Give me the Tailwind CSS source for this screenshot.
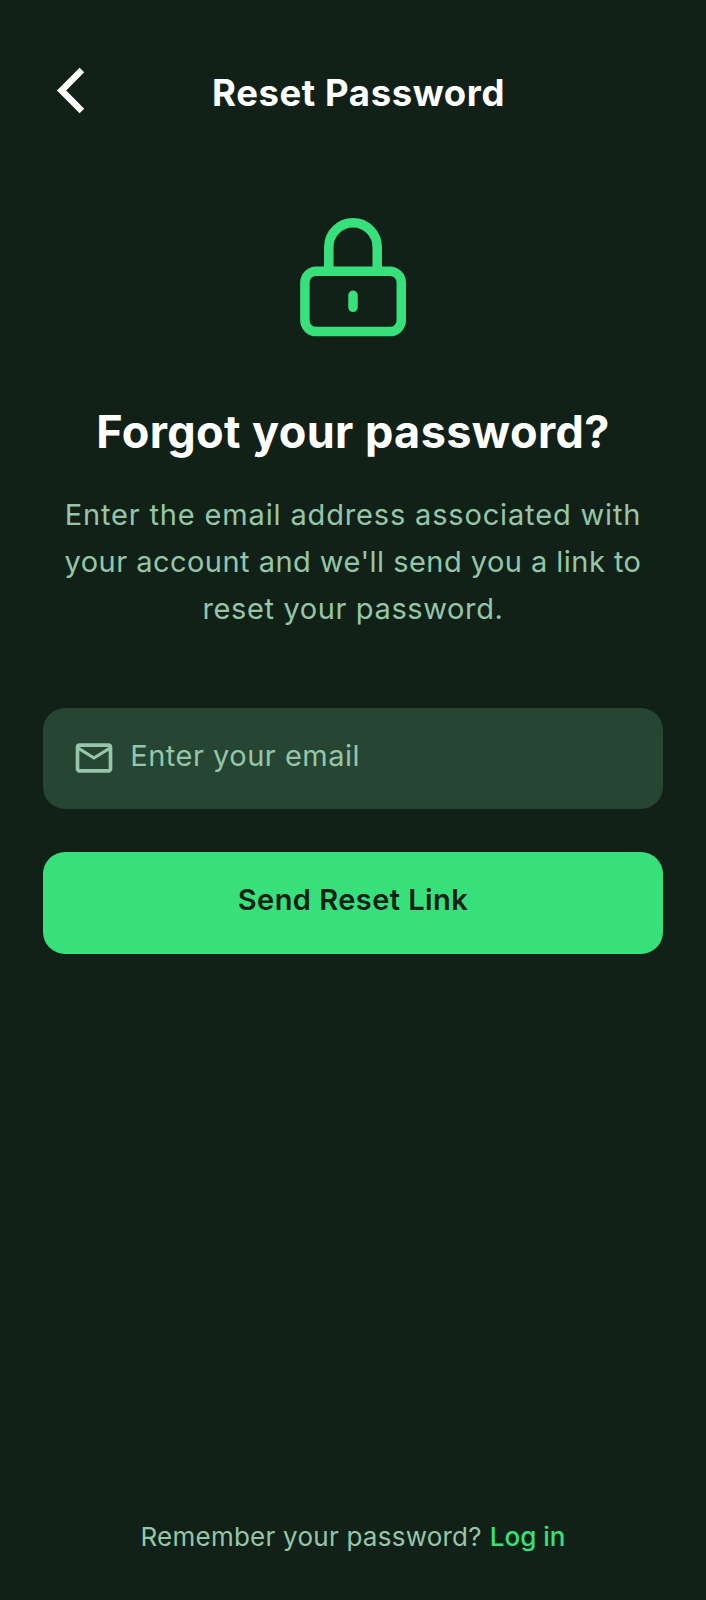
<!DOCTYPE html>
<html lang="en">
<head>
<meta charset="utf-8">
<title>Reset Password</title>
<script src="https://cdn.jsdelivr.net/npm/@tailwindcss/browser@4"></script>
</head>
<body class="bg-[#122118] font-['Inter',sans-serif] text-[#95c6a9] antialiased">
<div class="flex h-[1600px] w-[706px] flex-col whitespace-nowrap">
  <header class="flex h-[138px] items-start pt-[67px]">
    <button class="ml-[56px] w-[30px]" aria-label="Back">
      <svg class="block" width="30" height="48" viewBox="56 67 30 48" fill="#fff"><path d="M57 90.5 79.6 67.8 84.2 72.3 66.2 90.5 84.2 108.7 79.6 113.2Z"/></svg>
    </button>
    <h1 class="ml-[126px] pt-[3px] text-[36.5px] leading-[46px] font-bold tracking-[0.6px] text-white">Reset Password</h1>
  </header>
  <main class="flex flex-col px-[43px]">
    <svg class="mx-auto mt-[72px] block" width="120" height="134" viewBox="293 209.6 120 134" fill="none" stroke="#38e07b" stroke-width="9.5">
      <rect x="304.9" y="270.8" width="96.4" height="60.4" rx="11.3"/>
      <path d="M328.8 270V246.6a24.2 24.2 0 0 1 48.4 0V270"/>
      <path d="M353 294.9v12" stroke-linecap="round"/>
    </svg>
    <h2 class="mt-[61px] text-center text-[45px] leading-[54px] font-bold tracking-[0.4px] text-white">Forgot your password?</h2>
    <p class="mt-[32px] text-center text-[29px] leading-[47px]">
      <span class="block tracking-[0.84px]">Enter the email address associated with</span>
      <span class="block tracking-[0.46px]">your account and we'll send you a link to</span>
      <span class="block tracking-[0.62px]">reset your password.</span>
    </p>
    <label class="mt-[75.5px] flex h-[101.5px] items-center rounded-[22px] bg-[#264532] pl-[29.3px]">
      <svg class="block size-[44px] shrink-0" viewBox="0 0 24 24" fill="#95c6a9"><path d="M22 6c0-1.1-.9-2-2-2H4c-1.1 0-2 .9-2 2v12c0 1.1.9 2 2 2h16c1.1 0 2-.9 2-2V6zm-2 0-8 5-8-5h16zm0 12H4V8l8 5 8-5v10z"/></svg>
      <span class="ml-[14px] pb-[4px] text-[29px] leading-[36px] tracking-[0.5px]">Enter your email</span>
    </label>
    <button class="mt-[43px] h-[102px] rounded-[22px] bg-[#38e07b] pb-[6px] text-center text-[29px] leading-[36px] font-semibold tracking-[0.45px] text-[#122118]">Send Reset Link</button>
  </main>
  <footer class="mt-auto flex justify-center gap-[8px] pb-[45px] text-[26px] leading-[36px]">
    <span class="tracking-[0.24px]">Remember your password?</span>
    <a class="font-medium text-[#38e07b]">Log in</a>
  </footer>
</div>
</body>
</html>
